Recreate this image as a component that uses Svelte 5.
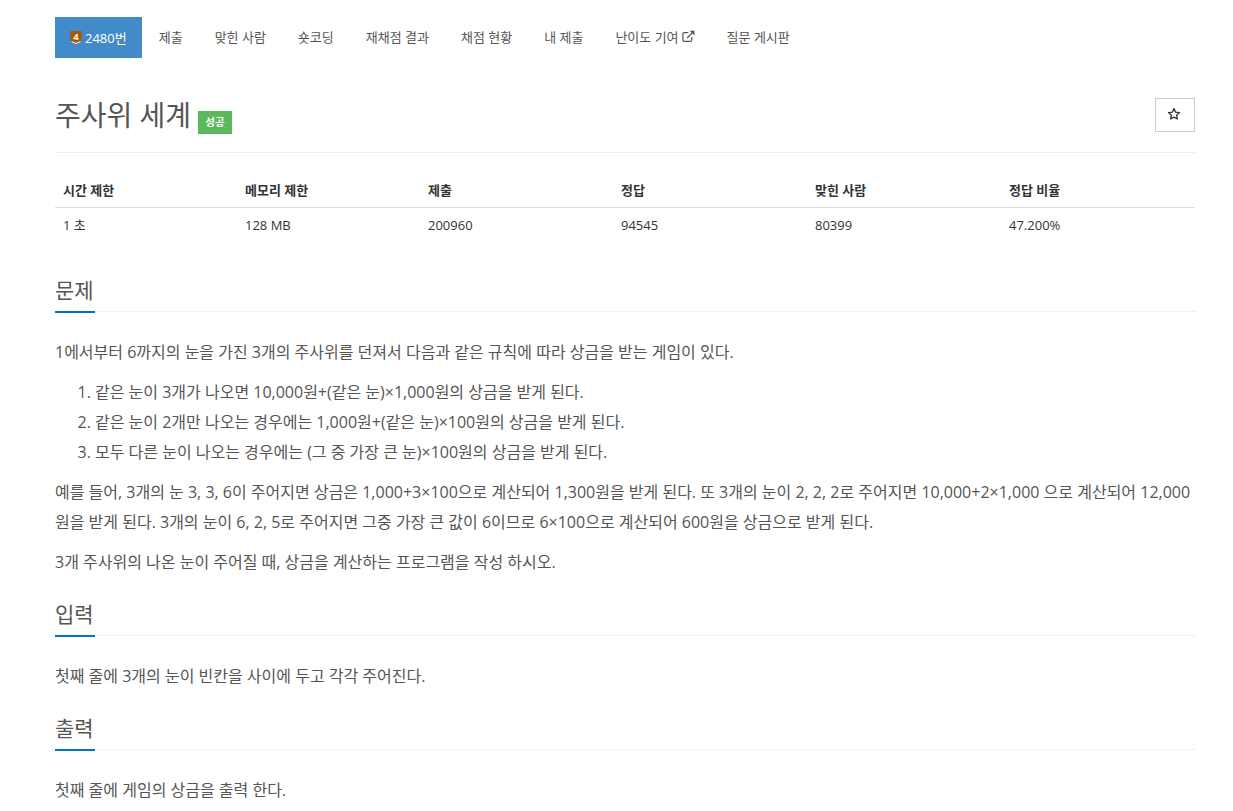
<script lang="ts">
  const tabs = ['제출', '맞힌 사람', '숏코딩', '재채점 결과', '채점 현황', '내 제출'];

  const stats = [
    { label: '시간 제한', value: '1 초', width: 182 },
    { label: '메모리 제한', value: '128 MB', width: 183 },
    { label: '제출', value: '200960', width: 193 },
    { label: '정답', value: '94545', width: 194 },
    { label: '맞힌 사람', value: '80399', width: 194 },
    { label: '정답 비율', value: '47.200%', width: 194 }
  ];

  const rules = [
    '같은 눈이 3개가 나오면 10,000원+(같은 눈)×1,000원의 상금을 받게 된다.',
    '같은 눈이 2개만 나오는 경우에는 1,000원+(같은 눈)×100원의 상금을 받게 된다.',
    '모두 다른 눈이 나오는 경우에는 (그 중 가장 큰 눈)×100원의 상금을 받게 된다.'
  ];
</script>

<div class="page">
  <nav class="tabs">
    <a class="tab active" href="#problem">
      <svg class="tier" viewBox="0 -2 12 16" width="12" height="16" aria-hidden="true">
        <path d="M0.5 0h11v10l-5.500 3.500l-5.500-3.500z" fill="#ad5600" />
        <path d="M1.500 10.500l4.500 2l4.500-2" fill="none" stroke="#fff" stroke-width="1" />
        <text x="6" y="8.800" text-anchor="middle" class="tier-num">4</text>
      </svg>
      2480번
    </a>
    {#each tabs as tab}
      <a class="tab" href="#problem">{tab}</a>
    {/each}
    <a class="tab" href="#problem">
      난이도 기여
      <svg class="ext" viewBox="0 0 14 14" width="13" height="13" aria-hidden="true">
        <path d="M10.5 7.500v3.200a1.600 1.600 0 0 1-1.600 1.600H2.600A1.600 1.600 0 0 1 1 10.700V4.400a1.600 1.600 0 0 1 1.600-1.600h4.200" fill="none" stroke="#555" stroke-width="1.300" />
        <path d="M5.500 8.600L11 3.100" fill="none" stroke="#555" stroke-width="1.500" />
        <path d="M8.200 0.800H13.400V6z" fill="#555" />
      </svg>
    </a>
    <a class="tab" href="#problem">질문 게시판</a>
  </nav>

  <header class="page-header">
    <h1>주사위 세계 <span class="label">성공</span></h1>
    <button class="star" aria-label="즐겨찾기">
      <svg viewBox="0 0 14 14" width="14" height="14" aria-hidden="true">
        <path d="M7 1.600l1.600 3.600l3.900 0.400l-2.900 2.600l0.800 3.800L7 10.100l-3.400 1.900l0.800-3.800L1.500 5.600l3.900-0.400z" fill="none" stroke="#333" stroke-width="1.300" stroke-linejoin="round" />
      </svg>
    </button>
  </header>

  <table class="stats">
    <thead>
      <tr>
        {#each stats as s}
          <th style="width: {s.width}px">{s.label}</th>
        {/each}
      </tr>
    </thead>
    <tbody>
      <tr>
        {#each stats as s}
          <td>{s.value}</td>
        {/each}
      </tr>
    </tbody>
  </table>

  <section class="first">
    <div class="headline"><h2>문제</h2></div>
    <p>1에서부터 6까지의 눈을 가진 3개의 주사위를 던져서 다음과 같은 규칙에 따라 상금을 받는 게임이 있다.</p>
    <ol>
      {#each rules as rule}
        <li>{rule}</li>
      {/each}
    </ol>
    <p>예를 들어, 3개의 눈 3, 3, 6이 주어지면 상금은 1,000+3×100으로 계산되어 1,300원을 받게 된다. 또 3개의 눈이 2, 2, 2로 주어지면 10,000+2×1,000 으로 계산되어 12,000원을 받게 된다. 3개의 눈이 6, 2, 5로 주어지면 그중 가장 큰 값이 6이므로 6×100으로 계산되어 600원을 상금으로 받게 된다.</p>
    <p>3개 주사위의 나온 눈이 주어질 때, 상금을 계산하는 프로그램을 작성 하시오.</p>
  </section>

  <section>
    <div class="headline"><h2>입력</h2></div>
    <p>첫째 줄에 3개의 눈이 빈칸을 사이에 두고 각각 주어진다.</p>
  </section>

  <section>
    <div class="headline"><h2>출력</h2></div>
    <p>첫째 줄에 게임의 상금을 출력 한다.</p>
  </section>
</div>

<style>
  :global(body) {
    background: #fff;
    font-family: "Open Sans", "Noto Sans CJK KR", sans-serif;
    color: #333;
  }

  .page {
    width: 1140px;
    margin-left: 55px;
    padding-top: 17px;
    height: 794px;
    overflow: hidden;
  }

  .tabs {
    display: flex;
    height: 41px;
  }

  .tab {
    display: flex;
    align-items: center;
    gap: 3px;
    padding: 0 16px 3px;
    font-size: 13px;
    color: #555;
    text-decoration: none;
  }

  .tab.active {
    background: #428bca;
    color: #fff;
    padding: 0 15px 1px;
    margin-right: 1px;
  }

  .tier-num {
    font-size: 9.5px;
    font-weight: 700;
    fill: #fff;
  }

  .page-header {
    display: flex;
    justify-content: space-between;
    align-items: flex-start;
    margin-top: 40px;
    padding-bottom: 20px;
    border-bottom: 1px solid #eee;
    height: 34px;
  }

  h1 {
    margin: 0;
    font-size: 28px;
    font-weight: 400;
    line-height: 34px;
    color: #555;
  }

  .label {
    display: inline-block;
    padding: 0 7px;
    background: #5cb85c;
    color: #fff;
    font-size: 10.5px;
    font-weight: 700;
    line-height: 23px;
    vertical-align: 0;
  }

  .star {
    display: flex;
    align-items: center;
    justify-content: center;
    box-sizing: border-box;
    width: 40px;
    height: 34px;
    padding: 0 2px 2px 0;
    background: #fff;
    border: 1px solid #ccc;
  }

  .stats {
    width: 100%;
    margin-top: 20px;
    border-collapse: collapse;
    table-layout: fixed;
    font-size: 13px;
    color: #333;
  }

  .stats th {
    box-sizing: border-box;
    padding: 8px;
    text-align: left;
    font-weight: 700;
    line-height: 18px;
    border-bottom: 1px solid #ddd;
  }

  .stats td {
    padding: 8px;
    line-height: 18px;
  }

  section {
    margin-top: 20px;
  }

  section.first {
    margin-top: 31px;
  }

  /* the h2 underline hangs over the dotted rule */
  .headline {
    display: flex;
    height: 38px;
    border-bottom: 1px dotted #e5e5e5;
  }

  h2 {
    box-sizing: border-box;
    flex: none;
    margin: 0;
    height: 40px;
    min-width: 40px;
    font-size: 21px;
    font-weight: 400;
    line-height: 34px;
    color: #555;
    border-bottom: 2px solid #0076c0;
  }

  p {
    margin: 25px 0 10px;
    font-size: 16px;
    line-height: 30px;
    color: #555;
  }

  ol {
    margin: 0 0 10px;
    padding-left: 40px;
    font-size: 16px;
    line-height: 30px;
    color: #555;
  }

  ol + p,
  p + p {
    margin-top: 10px;
  }
</style>
